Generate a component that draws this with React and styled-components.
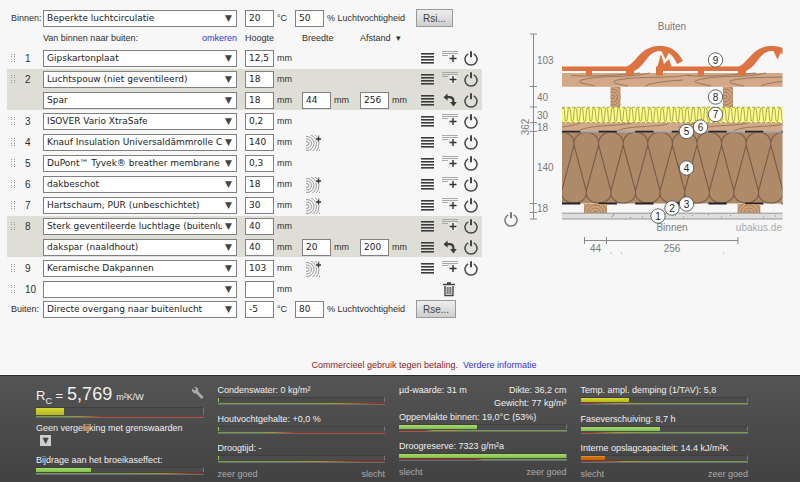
import React, { useState } from 'react';
import styled, { createGlobalStyle } from 'styled-components';

const GlobalStyle = createGlobalStyle`
* { box-sizing: border-box; }
body {
margin: 0;
background: #f7f7f7;
color: #2f2f2f;
font: 9px/13px "Liberation Sans", Arial, sans-serif;
}
button, input, select { font: inherit; color: inherit; margin: 0; }
a { color: #3333dd; text-decoration: none; }
svg { display: block; }
`
const Page = styled.div`
display: flex;
flex-direction: column;
min-height: 100vh;
`
const Main = styled.main`
display: grid;
grid-template-columns: minmax(0, 61fr) minmax(0, 39fr);
flex: 1;
`
const Panel = styled.form`
padding: 9px 6px 0 7px;
`
const Climate = styled.div`
display: grid;
grid-template-columns: 36px minmax(0, 1fr) 237px;
align-items: center;
height: 18px;
`
const ClimateLabel = styled.label`
padding-left: 4px;
white-space: nowrap;
`
const ClimateValues = styled.div`
display: flex;
align-items: center;
white-space: nowrap;
`
const Unit = styled.span`
padding-left: 3px;
width: ${p => p.$wide ? '92px' : '21px'};
`
const ResistanceButton = styled.button`
height: 18px;
padding: 0 6px;
border: 1px solid #999;
background: linear-gradient(#eeeeee, #cfcfcf);
font-size: 10px;
color: #444;
`
const Columns = styled.div`
display: grid;
grid-template-columns: 36px minmax(0, 1fr) 57px 58px 61px 61px;
align-items: center;
height: ${p => p.$head ? '21px' : '20px'};
padding-top: ${p => p.$head ? '2px' : '0'};
`
const Direction = styled.div`
display: flex;
justify-content: space-between;
margin-right: 8px;
`
const Layers = styled.div`
display: grid;
gap: 1px;
margin-bottom: 1px;
`
const Group = styled.div`
display: grid;
gap: 1px;
background: ${p => p.$shaded ? '#dfded6' : 'none'};
`
const Position = styled.div`
display: flex;
align-items: center;
gap: 9px;
padding-left: 4px;
font-size: 10px;
`
const SelectBox = styled.div`
position: relative;
margin-right: 8px;
&::after {
content: "▼";
position: absolute;
right: 5px;
top: 2px;
color: #444;
font: 9px/13px "DejaVu Sans", sans-serif;
pointer-events: none;
}
`
const Select = styled.select`
appearance: none;
display: block;
width: 100%;
height: 17px;
padding: 0 14px 0 3px;
border: 1px solid #808080;
border-radius: 0;
background: white;
color: #222;
font: 9px/13px "DejaVu Sans", Verdana, sans-serif;
`
const Field = styled.span`
display: flex;
align-items: center;
gap: 3px;
`
const NumberInput = styled.input`
width: 29px;
height: 17px;
padding: 0 3px;
border: 1px solid #808080;
border-radius: 0;
background: white;
color: #222;
font: 9px/13px "DejaVu Sans", Verdana, sans-serif;
`
const IconButton = styled.button`
display: block;
padding: 0;
border: none;
background: none;
color: #444;
cursor: pointer;
`
const Tools = styled.div`
display: grid;
grid-template-columns: 14px 29px 14px;
align-items: center;
justify-items: center;
`
const GrainSlot = styled.span`
padding-left: 4px;
`
const Notice = styled.p`
margin: 0;
padding: 0 0 3px 48px;
text-align: center;
color: #8b1a1a;
`
const DiagramPane = styled.section`
position: relative;
`
const DiagramSvg = styled.svg`
width: 100%;
font-family: "Liberation Sans", Arial, sans-serif;
font-size: 10px;
`
const DiagramPower = styled(IconButton)`
position: absolute;
left: 16px;
top: 212px;
color: #777;
`
const Footer = styled.footer`
display: grid;
grid-template-columns: repeat(4, minmax(0, 1fr));
gap: 14px;
padding: 8px 52px 1px 36px;
border-top: 1px solid #2c2c2c;
box-shadow: 0 -1px 0 #fff;
background: linear-gradient(#545454, #424242);
color: #f0f0f0;
`
const Value = styled.div`
display: flex;
align-items: baseline;
gap: 4px;
height: 23px;
line-height: 20px;
font-size: 13px;
sub { font-size: 9px; line-height: 0; }
strong { font-size: 18px; font-weight: normal; }
small { font-size: 9px; }
button { margin-left: auto; color: #aaa; }
`
const Result = styled.div`
& + & { margin-top: 8px; }
`
const Track = styled.div`
height: ${p => p.$tall ? '8px' : '5px'};
border-right: 1px solid #777;
border-top: 1px solid #3f3f3f;
background: #4b4b4b;
`
const Fill = styled.div`
height: 100%;
background: linear-gradient(${p => p.$color});
`
const Scale = styled.div`
height: 2px;
margin-top: 1px;
border-bottom: 1px solid #6d6d6d;
background: linear-gradient(90deg, ${p => p.$stops}) padding-box;
`
const Captions = styled.div`
display: flex;
justify-content: space-between;
margin-top: 5px;
color: #ababab;
`
const Facts = styled.div`
display: flex;
justify-content: space-between;
align-items: flex-start;
height: 27px;
text-align: right;
`
const Compare = styled.div`
margin: 4px 0 8px;
`
const DropButton = styled.button`
display: block;
width: 11px;
height: 11px;
margin-left: 4px;
padding: 0;
border: none;
background: #ccc;
color: #444;
font: 8px/11px "DejaVu Sans", sans-serif;
`

const layers = [
  { rows: [{ name: 'Gipskartonplaat', height: '12,5' }] },
  { rows: [{ name: 'Luchtspouw (niet geventileerd)', height: '18' }, { name: 'Spar', height: '18', width: '44', distance: '256' }] },
  { rows: [{ name: 'ISOVER Vario XtraSafe', height: '0,2' }] },
  { rows: [{ name: 'Knauf Insulation Universaldämmrolle Classic', height: '140', grain: true }] },
  { rows: [{ name: 'DuPont™ Tyvek® breather membrane', height: '0,3' }] },
  { rows: [{ name: 'dakbeschot', height: '18', grain: true }] },
  { rows: [{ name: 'Hartschaum, PUR (unbeschichtet)', height: '30', grain: true }] },
  { rows: [{ name: 'Sterk geventileerde luchtlage (buitenlucht)', height: '40' }, { name: 'dakspar (naaldhout)', height: '40', width: '20', distance: '200' }] },
  { rows: [{ name: 'Keramische Dakpannen', height: '103', grain: true }] },
  { rows: [{ name: '', height: '', empty: true }] },
];

const GripIcon = () => (
  <svg width="5" height="9" fill="#999">
    {[0, 2, 5, 7].map(y => <g key={y}><rect y={y} width="1" height="1" /><rect x="3" y={y} width="1" height="1" /></g>)}
  </svg>
)

const MenuIcon = () => (
  <svg width="14" height="12" fill="#3c3c3c">
    {[0, 3, 6, 9].map(y => <rect key={y} y={y + 1} width="13" height="1.6" />)}
  </svg>
)

const AddIcon = () => (
  <svg width="18" height="16">
    <path d="M1 1.500h16M1 3.500h16M1 5.500h6" stroke="#a9a9a9" strokeWidth="1" />
    <circle cx="12" cy="8.500" r="4.500" fill="#f3f3f3" opacity=".85" />
    <path d="M8.500 8.500h7M12 5v7" stroke="#333" strokeWidth="1.400" />
  </svg>
)

const PowerIcon = () => (
  <svg width="14" height="15" fill="none" stroke="currentColor" strokeWidth="1.5">
    <path d="M4.2 2.8a6 6 0 1 0 5.6 0" />
    <path d="M7 0.3v6" strokeWidth="2" />
  </svg>
)

const TurnIcon = () => (
  <svg width="14" height="14" fill="#3c3c3c">
    <path d="M3 4.2h3.4q4 0 4 4v1.5" fill="none" stroke="#3c3c3c" strokeWidth="2.2" />
    <path d="M0.500 4.200L4.600 0.600v7.200zM7 9h6.800L10.400 13.600z" />
  </svg>
)

const GrainIcon = () => (
  <svg width="16" height="17">
    <svg y="1" width="14" height="16" fill="none" stroke="#8f8f8f">
      {[2, 4.5, 7, 9.5, 12, 14.5].map(r => <circle key={r} cx="1" cy="8.500" r={r} strokeWidth=".9" />)}
    </svg>
    <circle cx="12.500" cy="5" r="3" fill="#f7f7f7" opacity=".85" />
    <path d="M10 5h5M12.500 2.500v5" stroke="#333" strokeWidth="1.400" />
  </svg>
)

const TrashIcon = () => (
  <svg width="13" height="15" fill="none" stroke="#444">
    <path d="M0 2.5h12M4 1h4M2 4v9.5h8V4" strokeWidth="1.4" />
    <path d="M4.2 5v7M6 5v7M7.8 5v7" />
  </svg>
)

const WrenchIcon = () => (
  <svg width="13" height="13" viewBox="0 0 13 13">
    <path d="M1 1.2l2.2 2.1 1.5-.3.2-1.5L3 .2C5.500-.4 7.800 1.200 7.200 4.400l4.900 5c1 1.100-.9 3.100-2.100 2.100L5.200 6.500C2.500 7.200.3 4.200 1 1.200z" fill="#aaa" />
  </svg>
)

const MaterialSelect = ({ id, label, value }) => (
  <SelectBox>
    <Select id={id} aria-label={label} defaultValue={value}>
      <option>{value}</option>
    </Select>
  </SelectBox>
)

const Millimetres = ({ label, value }) => (
  <Field>
    <NumberInput aria-label={label} defaultValue={value} />
    <span>mm</span>
  </Field>
)

const LayerRow = ({ row, index, first }) => (
  <Columns>
    <Position>{first && <><GripIcon /><span>{index}</span></>}</Position>
    <MaterialSelect label={'Materiaal ' + index} value={row.name} />
    <Millimetres label="Hoogte" value={row.height} />
    {row.width ? <Millimetres label="Breedte" value={row.width} /> :
      <GrainSlot>{row.grain && <IconButton type="button" aria-label="Balken toevoegen"><GrainIcon /></IconButton>}</GrainSlot>}
    {row.distance ? <Millimetres label="Afstand" value={row.distance} /> : <span />}
    <Tools>
      {row.empty ? <span /> : <IconButton type="button" aria-label="Menu"><MenuIcon /></IconButton>}
      <IconButton type="button" aria-label={row.empty ? 'Verwijderen' : row.width ? 'Draaien' : 'Laag toevoegen'}>
        {row.empty ? <TrashIcon /> : row.width ? <TurnIcon /> : <AddIcon />}
      </IconButton>
      {!row.empty && <IconButton type="button" aria-label="Aan/uit"><PowerIcon /></IconButton>}
    </Tools>
  </Columns>
)

const ClimateRow = ({ id, label, value, temperature, humidity, button }) => (
  <Climate>
    <ClimateLabel htmlFor={id}>{label}</ClimateLabel>
    <MaterialSelect id={id} value={value} />
    <ClimateValues>
      <NumberInput aria-label="Temperatuur" defaultValue={temperature} />
      <Unit>°C</Unit>
      <NumberInput aria-label="Luchtvochtigheid" defaultValue={humidity} />
      <Unit $wide>% Luchtvochtigheid</Unit>
      <ResistanceButton type="button">{button}</ResistanceButton>
    </ClimateValues>
  </Climate>
)

const marks = [
  [9, 715.5, 60], [8, 715.5, 97], [7, 715.5, 114.5], [6, 700.5, 127], [5, 686.5, 131.5],
  [4, 686.5, 168], [3, 686.5, 204], [2, 672, 208], [1, 658, 216],
];
const heights = [['103', 64], ['40', 101], ['30', 119], ['18', 131], ['140', 171], ['18', 212]];
const ticks = [34, 86.5, 107, 122.5, 131.5, 203.5, 212.5, 219];
const zigzag = Array.from({ length: 37 }, (_, i) => {
  const x = 562 + i * 6.2;
  return `M${x} 108.5q1.5-2 2.200 1L${x + 3.1} 120q1 3.500 2 0L${x + 6.2} 108.5`;
}).join('');
const coils = Array.from({ length: 11 }, (_, i) => {
  const x = 549.4 + i * 24.6;
  return `M${x} 145C${x - 1} 128 ${x + 25.6} 128 ${x + 24.6} 145L${x + 12.3} 191M${x} 145L${x + 12.3} 191M${x - 12.3} 191C${x - 14} 207 ${x + 14} 207 ${x + 12.3} 191`;
}).join('');

// one roof tile, x is the middle of its last foot
const Tile = ({ x }) => (
  <g transform={`translate(${x} 0)`} fill="#dd7340">
    <path d="M-86 66.500H-3C7 62 10 47 28 46C42 45 49 53 53 61L47 64C43 55 39 51 30 51C17 51 16 66 4 71V75.500H-4V71H-38V75.500H-44V71H-79V75.500H-86z" />
    <path d="M-85 68L-81 54L-78 64L-73 59L-70 68z" />
    <path d="M31 50L35.500 59.500L40 50z" />
  </g>
)

const Beam = ({ x, y, w, h, knot }) => (
  <svg x={x} y={y} width={w} height={h}>
    <rect width={w} height={h} fill="#cda27d" />
    <g fill="none" stroke="#a0764f">
      {[2, 5, 8, 11].map(r => <circle key={r} cx={knot[0]} cy={knot[1]} r={r} strokeWidth=".9" />)}
    </g>
    <rect x=".5" y="0" width={w - 1} height={h} fill="none" stroke="#b98d68" strokeWidth=".6" />
  </svg>
)

const Diagram = () => (
  <DiagramSvg viewBox="488 0 312 262" role="img" aria-label="Doorsnede van het dak">
    <clipPath id="section"><rect x="562" y="20" width="220.5" height="205" /></clipPath>
    <g clipPath="url(#section)">
      <rect x="562" y="73" width="221" height="13.800" fill="#d2a888" />
      <rect x="562" y="122.500" width="221" height="9" fill="#d2a888" />
      <g fill="none" stroke="#8c6b50" strokeWidth=".8">
        {[0, 116].map(x => (
          <g key={x} transform={`translate(${x} 0)`}>
            <path d="M571 75.500C590 77 615 75 640 73M595 86C582 83 572 82 586 79C605 75 630 78 650 73M628 86C612 83 608 81 624 79C644 76 660 79 690 75M645 86q6-4 38-6" />
            <path d="M580 130C596 124 612 127 632 123M617 131C630 125 650 128 668 124M562 127q10-1 19-4" />
          </g>
        ))}
      </g>
      <Beam x={610.5} y={87} w={10} h={20} knot={[2, 10]} />
      <Beam x={723} y={87} w={10} h={20} knot={[2, 10]} />
      <Tile x={630} />
      <Tile x={742} />
      <rect x="562" y="107" width="221" height="15.500" fill="#fbfb88" />
      <path d={zigzag} fill="none" stroke="#8a8946" strokeWidth=".7" />
      <path d="M562 107.300h221M562 122.500h221" stroke="#99984c" strokeDasharray="3 2" strokeWidth=".8" />
      <rect x="562" y="132" width="221" height="71.500" fill="#af8a69" />
      <path d={coils} fill="none" stroke="#775d49" strokeWidth="1.100" />
      <path d="M562 131.600h221" stroke="#aaa" strokeWidth="1.800" />
      <path d="M562 131.600h221M562 203.500h221" stroke="#262229" strokeWidth="1.800" strokeDasharray="18.300 18.300" />
      <Beam x={584} y={204} w={23} h={9} knot={[11.5, 9]} />
      <Beam x={737.5} y={204} w={23} h={9} knot={[11.5, 9]} />
      <rect x="562" y="213" width="221" height="6.200" fill="#dedede" />
      <path d="M562 213.200h221M562 219h221" stroke="#999" />
      <path d="M612 217l2-3M630 217.500h1M642 217h1M675 215h1M683 217h1M692 215.500h1M708 214.500h1M721 217h1M730 215.500h1M763 217h1M775 216h1" stroke="#777" strokeWidth=".8" />
    </g>
    <g stroke="#8a8a8a">
      <path d="M533.500 34V219" />
      {ticks.map(y => <path key={y} d={`M530 ${y}h7`} />)}
      <path d="M584.500 240.500H738M584.500 237v7M606.500 237v7M738 237v7" />
      <path d="M610.500 253h1M621 253h1M723 253h1" />
    </g>
    <g fill="#7b7b7b">
      {heights.map(([text, y]) => <text key={y} x="537" y={y}>{text}</text>)}
      <text x="-127" y="528.500" transform="rotate(-90)" textAnchor="middle">362</text>
      <text x="672" y="30" textAnchor="middle">Buiten</text>
      <text x="672" y="231" textAnchor="middle">Binnen</text>
      <text x="595.500" y="252" textAnchor="middle">44</text>
      <text x="672" y="252" textAnchor="middle">256</text>
      <text x="782" y="231" textAnchor="end" fill="#aaa">ubakus.de</text>
    </g>
    {marks.map(([n, x, y]) => (
      <g key={n}>
        <circle cx={x} cy={y} r="7.200" fill="white" stroke="#555" strokeWidth=".9" />
        <text x={x} y={y + 3.5} textAnchor="middle" fill="#222">{n}</text>
      </g>
    ))}
  </DiagramSvg>
)

const green = '#a5d96c, #82c04a';
const yellow = '#d6d83a, #b5b81a';
const orange = '#e39a45, #cc6a00 40%';
const G = '#6f9d4c', Y = '#a3992c', R = '#9c2a26';

const Meter = ({ value, color, stops, tall }) => (
  <>
    <Track $tall={tall}><Fill $color={color} style={{ width: value + '%' }} /></Track>
    <Scale $stops={stops} />
  </>
)

const Measure = ({ label, ...meter }) => (
  <Result>
    <div>{label}</div>
    <Meter {...meter} />
  </Result>
)

const App = () => {

  const [reversed, setReversed] = useState(false);
  const shown = reversed ? [...layers].reverse() : layers;

  return (
    <Page>
      <GlobalStyle />
      <Main>
        <Panel>
          <ClimateRow id="binnen" label="Binnen:" value="Beperkte luchtcirculatie" temperature="20" humidity="50" button="Rsi..." />
          <Columns $head>
            <span />
            <Direction>
              <span>Van binnen naar buiten:</span>
              <a href="#omkeren" onClick={() => setReversed(!reversed)}>omkeren</a>
            </Direction>
            <span>Hoogte</span>
            <span>Breedte</span>
            <span>Afstand &nbsp;▾</span>
          </Columns>
          <Layers>
            {shown.map((layer, i) => (
              <Group key={i} $shaded={layer.rows.length > 1}>
                {layer.rows.map((row, j) => <LayerRow key={j} row={row} index={i + 1} first={j === 0} />)}
              </Group>
            ))}
          </Layers>
          <ClimateRow id="buiten" label="Buiten:" value="Directe overgang naar buitenlucht" temperature="-5" humidity="80" button="Rse..." />
        </Panel>
        <DiagramPane>
          <Diagram />
          <DiagramPower type="button" aria-label="Maten aan/uit"><PowerIcon /></DiagramPower>
        </DiagramPane>
      </Main>
      <Notice>Commercieel gebruik tegen betaling. &nbsp;<a href="#informatie">Verdere informatie</a></Notice>
      <Footer>
        <div>
          <Value>
            <span>R<sub>C</sub> =</span>
            <strong>5,769</strong>
            <small>m²K/W</small>
            <IconButton type="button" aria-label="Instellingen"><WrenchIcon /></IconButton>
          </Value>
          <Meter tall value={17} color={yellow} stops={`${G}, ${G} 15%, ${Y} 25%, ${R} 40%, ${R}`} />
          <Compare>
            <div id="grens">Geen vergelijking met grenswaarden</div>
            <DropButton type="button" aria-labelledby="grens">▼</DropButton>
          </Compare>
          <Measure label="Bijdrage aan het broeikaseffect:" value={33} color={green} stops={`${G}, ${G} 50%, ${Y} 75%, ${R} 95%`} />
        </div>
        <div>
          <Measure label="Condenswater: 0 kg/m²" value={1} color={green} stops={`${G}, ${G} 55%, ${Y} 70%, ${R} 95%`} />
          <Measure label="Houtvochtgehalte: +0,0 %" value={1} color={green} stops={`${G}, ${G} 25%, ${Y} 33%, ${R} 47%`} />
          <Measure label="Droogtijd: -" value={1} color={green} stops={`${G}, ${G} 30%, ${Y} 60%, ${R} 85%`} />
          <Captions><span>zeer goed</span><span>slecht</span></Captions>
        </div>
        <div>
          <Facts>
            <span>µd-waarde: 31 m</span>
            <span>Dikte: 36,2 cm<br />Gewicht: 77 kg/m²</span>
          </Facts>
          <Measure label="Oppervlakte binnen: 19,0°C (53%)" value={47} color={green} stops={`${R}, ${R} 16%, ${Y} 20%, ${Y} 30%, ${G} 40%`} />
          <Measure label="Droogreserve: 7323 g/m²a" value={100} color={green} stops={`${R}, ${R} 45%, ${Y} 51%, ${G} 55%`} />
          <Captions><span>slecht</span><span>zeer goed</span></Captions>
        </div>
        <div>
          <Measure label="Temp. ampl. demping (1/TAV): 5,8" value={29} color={yellow} stops={`${R}, ${R} 4%, ${Y} 20%, ${G} 50%`} />
          <Measure label="Faseverschuiving: 8,7 h" value={48} color={green} stops={`${R}, ${R} 5%, ${Y} 22%, ${G} 45%`} />
          <Measure label="Interne opslagcapaciteit: 14.4 kJ/m²K" value={15} color={orange} stops={`${R}, #a85a2a 20%, ${Y} 26%, ${G} 55%`} />
          <Captions><span>slecht</span><span>zeer goed</span></Captions>
        </div>
      </Footer>
    </Page>
  )
}

export default App
